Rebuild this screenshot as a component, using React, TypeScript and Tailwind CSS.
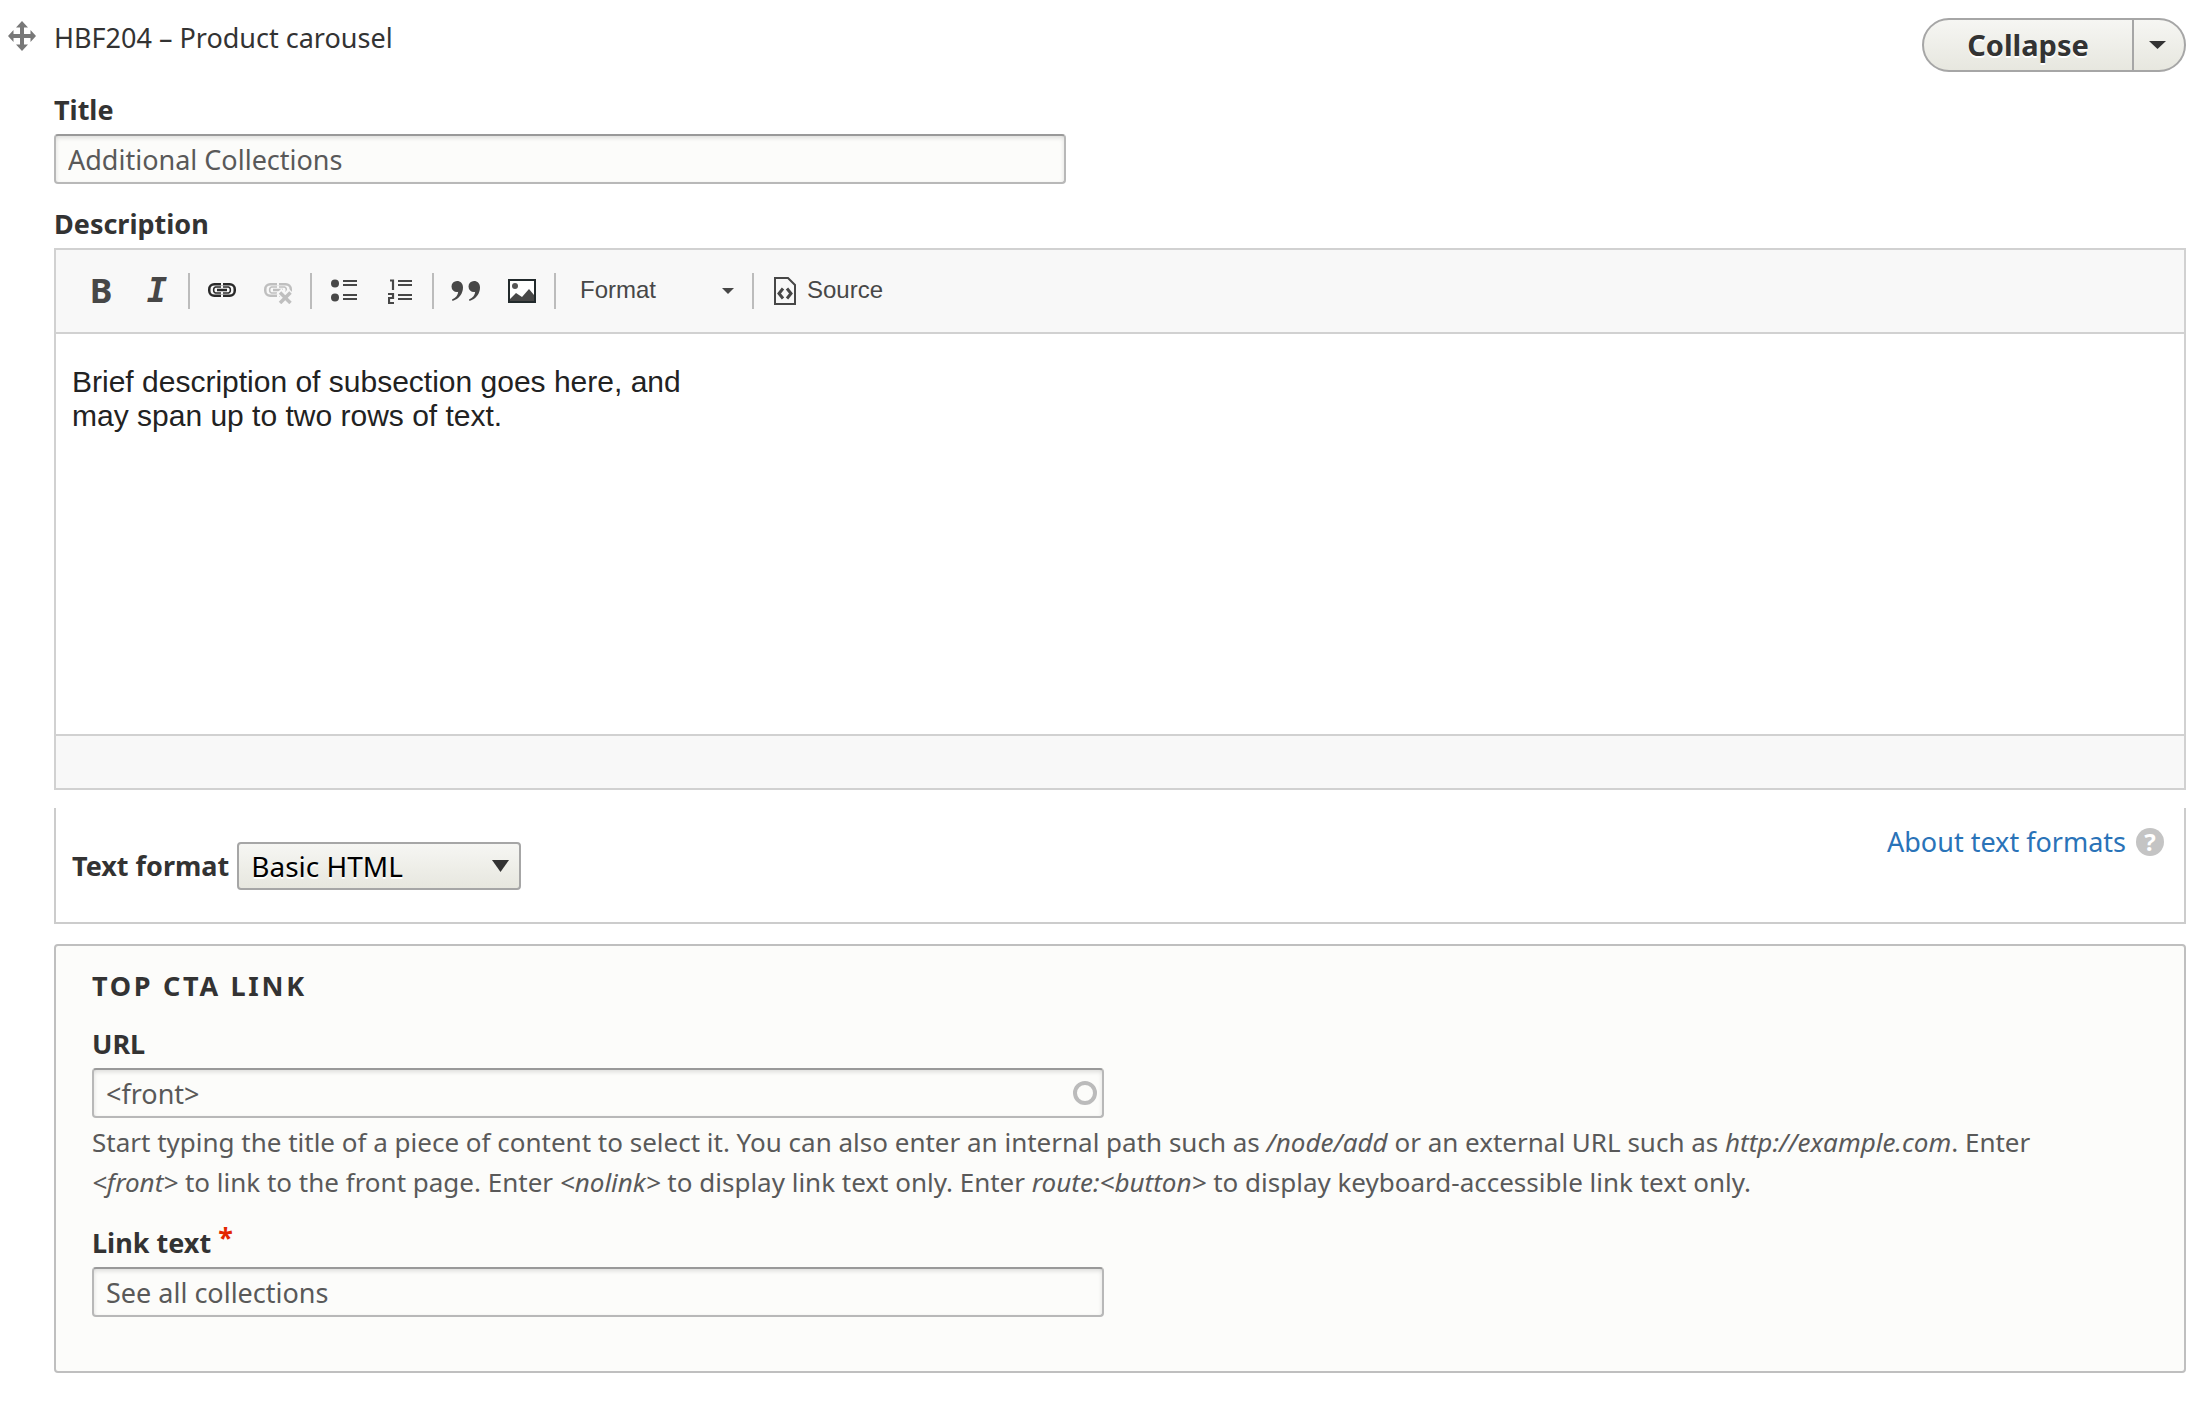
import { useState, type ReactNode } from 'react';

const inputClass =
  'block h-[50px] w-full max-w-[1012px] rounded-[4px] border-2 border-[#b8b8b8] border-t-[#999999] bg-[#fcfcfa] px-3 text-[27px] leading-[44px] text-[#595959] shadow-[inset_0_2px_4px_rgba(0,0,0,0.125)] outline-none';

const labelClass = 'block text-[27px] font-bold leading-[36px] text-[#333333]';

const textFormats = ['Basic HTML', 'Restricted HTML', 'Full HTML'];

function ToolButton({ label, disabled, children }: { label: string; disabled?: boolean; children: ReactNode }) {
  return (
    <button type="button" aria-label={label} disabled={disabled} className="flex h-9 w-14 items-center justify-center">
      {children}
    </button>
  );
}

function Separator() {
  return <div className="mx-1 h-9 w-0.5 bg-[#bcbcbc]" />;
}

function MoveIcon() {
  return (
    <svg width="28" height="30" viewBox="0 0 28 30" className="mt-[3px]" fill="#787878">
      <path d="M14 0l6 6.500h-4v6.500h6.500v-4L28 15l-5.500 6v-4H16v6.500h4L14 30l-6-6.500h4V17H5.500v4L0 15l5.500-6v4H12V6.500H8z" />
    </svg>
  );
}

function LinkIcon({ broken }: { broken?: boolean }) {
  const color = broken ? '#bfbfbf' : '#2a2a2a';
  return (
    <svg width="28" height="26" viewBox="0 0 28 26" fill="none">
      <rect x="1.250" y="6.250" width="25.500" height="11.500" rx="5" stroke={color} strokeWidth="2.500" />
      <path d="M14 5v2.500M14 16.500V19" stroke="#f8f8f8" strokeWidth="2" />
      <path d="M13 9H7.500C5 9.500 5 14.500 7.500 15H13M15 9h5.500c2.500.5 2.500 5.500 0 6H15" stroke={color} strokeWidth="1.500" />
      <path d="M9 12h10" stroke={color} strokeWidth="2.500" />
      {broken && (
        <>
          <path d="M15 13l12 12M27 13L15 25" stroke="#f8f8f8" strokeWidth="7" />
          <path d="M16 14.500l10.500 10.500M26.500 14.500L16 25" stroke={color} strokeWidth="3.500" />
        </>
      )}
    </svg>
  );
}

function BulletListIcon() {
  return (
    <svg width="28" height="24" viewBox="0 0 28 24" fill="#474747">
      <circle cx="5" cy="4.500" r="4" />
      <circle cx="5" cy="18.500" r="4" />
      <path d="M13 1h14v2H13zM13 5h14v2H13zM13 15h14v2H13zM13 19h14v2H13z" />
    </svg>
  );
}

function NumberedListIcon() {
  return (
    <svg width="24" height="26" viewBox="0 0 24 26">
      <path d="M10 2h14v2H10zM10 6h14v2H10zM10 16h14v2H10zM10 20h14v2H10z" fill="#474747" />
      <path d="M2 2.500h3V12M0 16h5v4H1v5h5" stroke="#474747" strokeWidth="2.200" fill="none" />
    </svg>
  );
}

function QuoteIcon() {
  return (
    <svg width="30" height="22" viewBox="0 0 30 22" fill="#474747">
      <path d="M6 1c3.500 0 6 2.500 6 6.500 0 6-4 11.500-10.500 13.500l-.5-1.500c4-1.800 6-4.500 6.200-7.800A5.300 5.300 0 0 1 6 12 5.500 5.500 0 0 1 6 1z" />
      <path d="M23 1c3.500 0 6 2.500 6 6.500 0 6-4 11.500-10.500 13.500l-.5-1.500c4-1.800 6-4.500 6.200-7.800A5.300 5.300 0 0 1 23 12a5.500 5.500 0 0 1 0-11z" />
    </svg>
  );
}

function ImageIcon() {
  return (
    <svg width="28" height="24" viewBox="0 0 28 24">
      <rect x="1" y="1" width="26" height="22" fill="#ffffff" stroke="#222a2c" strokeWidth="2" />
      <circle cx="7" cy="7" r="3" fill="#555555" />
      <path d="M2 22v-2l6-6 6 4 7-8 5 6v6z" fill="#474747" />
    </svg>
  );
}

function SourceIcon() {
  return (
    <svg width="22" height="28" viewBox="0 0 22 28" fill="none" stroke="#474747">
      <path d="M1 1h13l7 7v19H1z" strokeWidth="2" />
      <path d="M9 11.500l-4 5 4 5M13 11.500l4 5-4 5" strokeWidth="3" />
    </svg>
  );
}

function Toolbar() {
  return (
    <div className="flex h-[84px] items-center border-b-2 border-[#d1d1d1] bg-[#f8f8f8] pl-4 text-[24px] text-[#474747]" style={{ fontFamily: '"Liberation Sans", Arial, sans-serif' }}>
      <ToolButton label="Bold">
        <span className="pb-0.5 pl-0.5 font-['Noto_Sans'] text-[34px] font-bold leading-9">B</span>
      </ToolButton>
      <ToolButton label="Italic">
        <span className="pb-0.5 pl-0.5 font-['DejaVu_Sans_Mono'] text-[34px] font-bold italic leading-9">I</span>
      </ToolButton>
      <Separator />
      <ToolButton label="Link"><LinkIcon /></ToolButton>
      <ToolButton label="Unlink" disabled><LinkIcon broken /></ToolButton>
      <Separator />
      <ToolButton label="Bulleted list"><BulletListIcon /></ToolButton>
      <ToolButton label="Numbered list"><NumberedListIcon /></ToolButton>
      <Separator />
      <ToolButton label="Block quote"><QuoteIcon /></ToolButton>
      <ToolButton label="Image"><ImageIcon /></ToolButton>
      <Separator />
      <button type="button" className="flex h-9 w-[188px] items-center justify-between pl-5 pr-3.5">
        <span className="pb-0.5">Format</span>
        <svg width="12" height="6" viewBox="0 0 12 6" fill="#474747"><path d="M0 0h12L6 6z" /></svg>
      </button>
      <Separator />
      <button type="button" className="flex h-9 items-center gap-[11px] px-4">
        <SourceIcon />
        <span className="pb-0.5">Source</span>
      </button>
    </div>
  );
}

export default function App() {
  const [title, setTitle] = useState('Additional Collections');
  const [format, setFormat] = useState('Basic HTML');
  const [url, setUrl] = useState('<front>');
  const [linkText, setLinkText] = useState('See all collections');

  return (
    <div className="bg-white pb-7 pl-2 pr-3 text-[#333333]" style={{ fontFamily: '"Noto Sans", sans-serif' }}>
      <header className="flex items-start justify-between pt-[18px]">
        <div className="flex items-start gap-[18px]">
          <MoveIcon />
          <span className="pt-0.5 text-[27px] leading-[36px]">HBF204 – Product carousel</span>
        </div>
        <div className="flex h-[54px] rounded-full border-2 border-[#a6a6a6] bg-linear-to-b from-[#f6f6f3] to-[#e7e7df]">
          <button type="button" className="w-[208px] text-[29px] font-bold leading-[50px] text-[#333333] [text-shadow:0_2px_0_#ffffff]">
            Collapse
          </button>
          <button type="button" aria-label="More actions" className="flex w-[52px] items-center border-l-2 border-[#a6a6a6] pl-[15px]">
            <svg width="17" height="8" viewBox="0 0 17 8" fill="#333333"><path d="M0 0h17L8.500 8z" /></svg>
          </button>
        </div>
      </header>

      <main className="pl-[46px] pt-5">
        <label htmlFor="title" className={labelClass}>Title</label>
        <input id="title" className={`${inputClass} mt-1.5`} value={title} onChange={(e) => setTitle(e.target.value)} />

        <label id="description-label" className={`${labelClass} mt-[22px]`}>Description</label>
        <section className="mt-1.5 border-2 border-[#d1d1d1]">
          <Toolbar />
          <div
            role="textbox"
            aria-labelledby="description-label"
            contentEditable
            suppressContentEditableWarning
            className="h-[400px] px-4 pt-[31px] text-[30px] leading-[34px] text-[#222222] outline-none"
            style={{ fontFamily: '"Liberation Sans", Arial, sans-serif' }}
          >
            Brief description of subsection goes here, and<br />
            may span up to two rows of text.
          </div>
          <div className="h-[54px] border-t-2 border-[#d1d1d1] bg-[#f8f8f8]" />
        </section>

        <section className="mt-[18px] flex h-[116px] items-start justify-between border-2 border-t-0 border-[#cccccc] pl-4 pr-5">
          <div className="flex items-center gap-2 pt-[34px]">
            <label htmlFor="format" className={labelClass}>Text format</label>
            <div className="relative">
              <select
                id="format"
                className="block h-12 w-[284px] appearance-none rounded-[4px] border-2 border-[#a6a6a6] bg-linear-to-b from-[#f6f6f3] to-[#e7e7df] pl-3 text-[28px] leading-[44px] text-black [text-shadow:0_2px_0_#ffffff]"
                value={format}
                onChange={(e) => setFormat(e.target.value)}
              >
                {textFormats.map((name) => (
                  <option key={name}>{name}</option>
                ))}
              </select>
              <svg className="pointer-events-none absolute right-3 top-[18px]" width="17" height="12" viewBox="0 0 17 12" fill="#333333"><path d="M0 0h17L8.500 12z" /></svg>
            </div>
          </div>
          <a href="#formats" className="flex items-center gap-2.5 pt-4 text-[27px] leading-[36px] text-[#2a73b8]">
            About text formats
            <span className="flex size-7 items-center justify-center rounded-full bg-[#c4c4c4] text-[24px] font-bold leading-7 text-white">?</span>
          </a>
        </section>

        <section className="mt-5 rounded-[4px] border-2 border-[#bfbfbf] bg-[#fcfcfa] pb-[54px] pl-9 pr-20 pt-[22px]">
          <h2 className="text-[27px] font-bold uppercase leading-[36px] tracking-widest">Top CTA link</h2>

          <label htmlFor="url" className={`${labelClass} mt-[22px]`}>URL</label>
          <div className="relative mt-1.5 max-w-[1012px]">
            <input id="url" className={inputClass} value={url} onChange={(e) => setUrl(e.target.value)} />
            <span className="absolute right-[7px] top-[13px] size-6 rounded-full border-4 border-[#bbbbbb]" />
          </div>
          <p className="mt-1 text-[26px] leading-[40px] text-[#595959]">
            Start typing the title of a piece of content to select it. You can also enter an internal path such as{' '}
            <em>/node/add</em> or an external URL such as <em>http://example.com</em>. Enter <em>&lt;front&gt;</em> to
            link to the front page. Enter <em>&lt;nolink&gt;</em> to display link text only. Enter{' '}
            <em>route:&lt;button&gt;</em> to display keyboard-accessible link text only.
          </p>

          <label htmlFor="link-text" className={`${labelClass} mt-[22px]`}>
            Link text <span className="align-[5px] leading-none text-[#e32700]">*</span>
          </label>
          <input id="link-text" required className={`${inputClass} mt-1.5`} value={linkText} onChange={(e) => setLinkText(e.target.value)} />
        </section>
      </main>
    </div>
  );
}
